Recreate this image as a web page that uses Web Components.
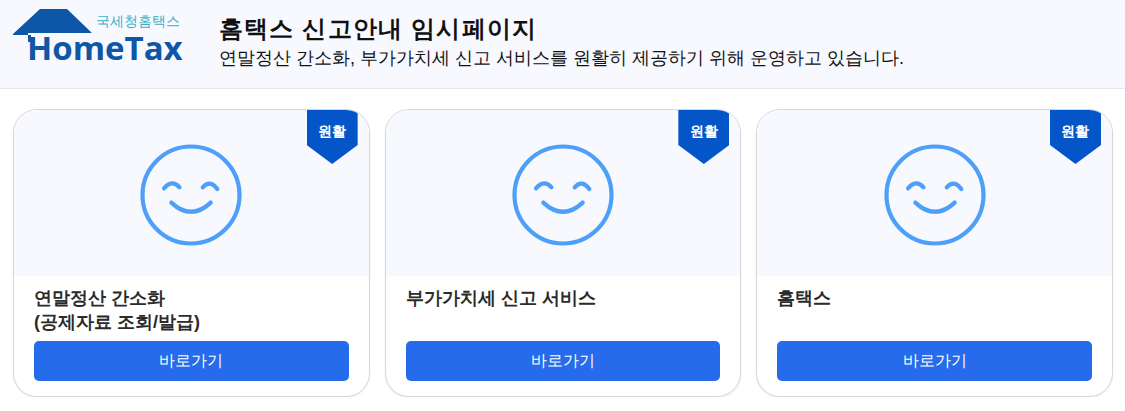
<!DOCTYPE html>
<html lang="ko">
<head>
<meta charset="utf-8">
<title>홈택스 신고안내 임시페이지</title>
<style>
  html, body { margin: 0; padding: 0; background: #fff; }
  body { font-family: "Liberation Sans", sans-serif; color: #111; }
</style>
</head>
<body>
<site-header></site-header>
<card-grid>
  <service-card status="원활">연말정산 간소화<br>(공제자료 조회/발급)</service-card>
  <service-card status="원활">부가가치세 신고 서비스</service-card>
  <service-card status="원활">홈택스</service-card>
</card-grid>

<script>
class HometaxLogo extends HTMLElement {
  connectedCallback() {
    if (this.shadowRoot) return;
    this.attachShadow({ mode: "open" }).innerHTML = `
    <style>
      :host { display: block; position: relative; width: 172px; height: 56px; flex-shrink: 0; }
      svg { position: absolute; left: 0; top: 0; }
      .top { position: absolute; left: 83px; top: 2px; font-size: 14px; line-height: 20px; color: #3bb0c8; white-space: nowrap; }
      .name { position: absolute; left: 14px; top: 17px; font: bold 33px/44px "Open Sans", sans-serif; color: #0d56a8; white-space: nowrap; }
    </style>
    <svg width="172" height="56" viewBox="0 0 172 56">
      <path d="M0 25 L27 0 H54 L79 24 H15 V33 H18 V26 H0 Z" fill="#0d56a8"/>
    </svg>
    <span class="top">국세청홈택스</span>
    <span class="name">HomeTax</span>`;
  }
}
customElements.define("hometax-logo", HometaxLogo);

class SiteHeader extends HTMLElement {
  connectedCallback() {
    if (this.shadowRoot) return;
    this.attachShadow({ mode: "open" }).innerHTML = `
    <style>
      :host { display: flex; box-sizing: border-box; height: 89px; padding: 9px 13px 0; gap: 34px; background: #f8f9ff; border-bottom: 1px solid #e5e7eb; }
      .text { padding-top: 4px; }
      h1 { margin: 0; font-size: 24px; line-height: 32px; font-weight: 700; letter-spacing: 1.2px; color: #111; }
      p { margin: 0; font-size: 18px; line-height: 26px; color: #111; }
    </style>
    <hometax-logo></hometax-logo>
    <div class="text">
      <h1>홈택스 신고안내 임시페이지</h1>
      <p>연말정산 간소화, 부가가치세 신고 서비스를 원활히 제공하기 위해 운영하고 있습니다.</p>
    </div>`;
  }
}
customElements.define("site-header", SiteHeader);

class CardGrid extends HTMLElement {
  connectedCallback() {
    if (this.shadowRoot) return;
    this.attachShadow({ mode: "open" }).innerHTML = `
    <style>
      :host { display: grid; grid-template-columns: repeat(3, 1fr); gap: 15px; padding: 20px 12px 0 13px; }
    </style>
    <slot></slot>`;
  }
}
customElements.define("card-grid", CardGrid);

class ServiceCard extends HTMLElement {
  connectedCallback() {
    if (this.shadowRoot) return;
    const status = this.getAttribute("status");
    this.attachShadow({ mode: "open" }).innerHTML = `
    <style>
      :host { display: block; box-sizing: border-box; height: 288px; position: relative; background: #fff; border: 1px solid #d8d8dc; border-radius: 24px; overflow: hidden; box-shadow: 0 1px 2px rgba(0,0,0,.08); }
      .pic { box-sizing: border-box; height: 166px; padding-top: 3px; background: #f8f9ff; display: flex; align-items: center; justify-content: center; }
      .ribbon { position: absolute; top: 0; right: 11px; width: 51px; height: 54px; background: #0456c8; clip-path: polygon(0 0, 100% 0, 100% 35px, 50% 100%, 0 35px); color: #fff; font-size: 14px; font-weight: 700; line-height: 20px; text-align: center; padding-top: 11px; box-sizing: border-box; }
      .body { padding: 10px 20px 0; }
      .title { height: 55px; font-size: 18px; line-height: 24px; font-weight: 700; color: #2b2b2b; }
      button { display: block; width: 100%; height: 40px; border: 0; border-radius: 5px; background: #256bec; color: #fff; font: 400 16px/24px "Liberation Sans", sans-serif; }
    </style>
    <div class="pic">
      <svg width="104" height="104" viewBox="0 0 104 104" fill="none" stroke="#4d9ff8" stroke-linecap="round">
        <circle cx="52" cy="52" r="48.5" stroke-width="4.2"/>
        <path d="M25 45.3 Q33 36 40.5 44.3 M63.7 44.3 Q71 36 78.3 46 M32.3 59.6 Q52 78 71.7 59.6" stroke-width="4.2"/>
      </svg>
    </div>
    <div class="ribbon">${status}</div>
    <div class="body">
      <div class="title"><slot></slot></div>
      <button type="button">바로가기</button>
    </div>`;
  }
}
customElements.define("service-card", ServiceCard);
</script>
</body>
</html>
